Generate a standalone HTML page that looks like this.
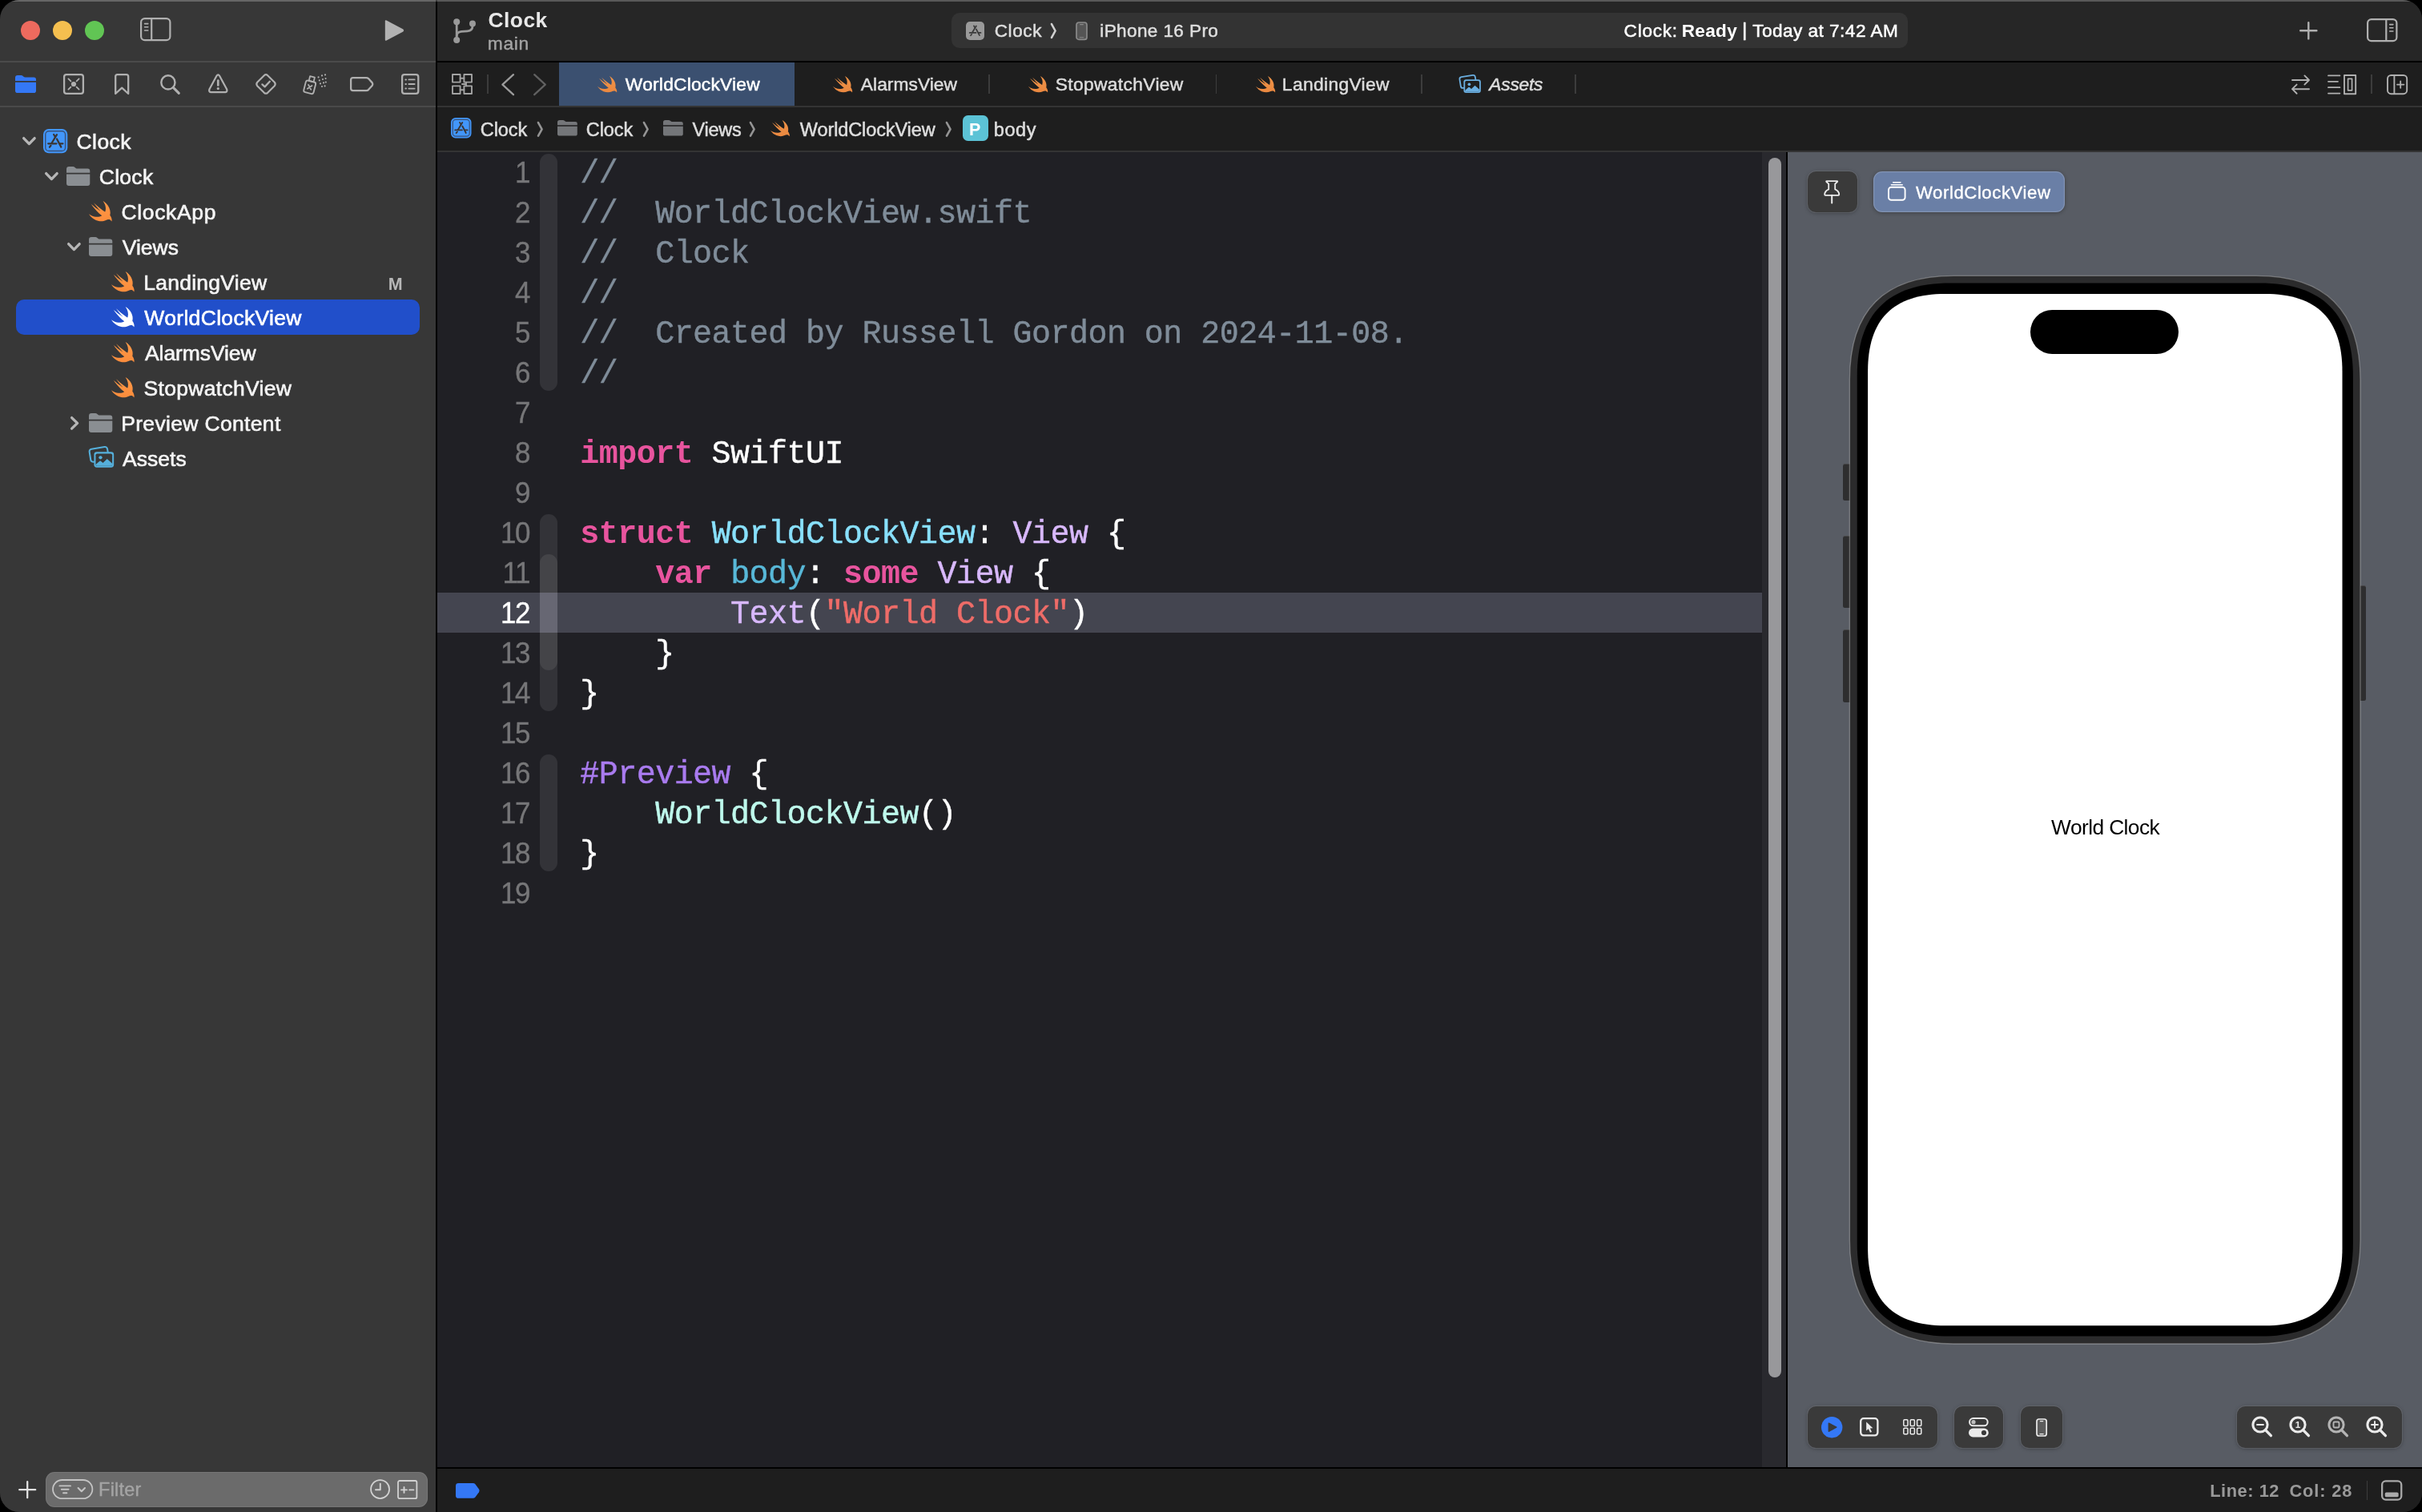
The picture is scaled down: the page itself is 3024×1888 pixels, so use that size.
<!DOCTYPE html><html lang="en"><head><meta charset="utf-8"><title>Clock — WorldClockView.swift</title><style>
html,body{margin:0;padding:0;background:#000;}
body{width:3024px;height:1888px;overflow:hidden;position:relative;font-family:"Liberation Sans",sans-serif;}
div,svg,section,header,nav,footer,aside,main,.t{position:absolute;box-sizing:border-box;margin:0;padding:0;}
.ic{overflow:visible;display:block}
.t{white-space:pre;line-height:1;display:block}
#window{will-change:transform;left:0;top:0;width:3024px;height:1888px;border-radius:24px;overflow:hidden;background:#1e1e1e;}
#sidebar{left:0;top:0;width:544px;height:1888px;background:#373737;}
#split{left:544px;top:0;width:2px;height:1888px;background:#000;}
#toolbar{left:546px;top:0;width:2478px;height:76px;background:#262626;}
#tabbar{left:546px;top:78px;width:2478px;height:54px;background:#1e1e1e;}
#crumbs{left:546px;top:134px;width:2478px;height:54px;background:#1e1e1e;}
#editor{left:546px;top:190px;width:1654px;height:1642px;background:#202025;overflow:hidden;}
#gutterR{left:2200px;top:190px;width:30px;height:1642px;background:#29292e;}
#preview{left:2232px;top:190px;width:792px;height:1642px;background:#585c64;overflow:hidden;}
#status{left:546px;top:1834px;width:2478px;height:54px;background:#1e1e1e;}
.hl{background:#000}
.code{font-family:"Liberation Mono",monospace;font-size:40px;letter-spacing:-0.515px;line-height:50px;white-space:pre;color:#ffffff;height:50px;left:178.2px;margin-top:2.8px;-webkit-text-stroke:0.4px}
.code b{font-weight:700;color:#e8549e;-webkit-text-stroke:0}
.ln{font-size:36.6px;letter-spacing:-1.5px;line-height:50px;height:50px;width:100px;left:15px;transform:scaleX(0.955);transform-origin:98.5px 25px;-webkit-text-stroke:0.35px;text-align:right;color:#767678;white-space:pre;margin-top:0.9px}
.c{color:#7f8c99}.ty{color:#88e0fc}.sy{color:#d8b8fc}.od{color:#58b8d8}.st{color:#ee6c68}.mc{color:#a97bef}.pj{color:#bef8ec}
.pbtn{background:#3a3a3a;border-radius:10.5px;box-shadow:0 0 0 1px rgba(255,255,255,0.10),0 1px 5px rgba(0,0,0,0.35);}
</style></head><body><div id="window"><aside id="sidebar"><div style="left:25.8px;top:25.8px;width:24.4px;height:24.4px;border-radius:50%;background:#ed6a5e;"></div><div style="left:65.8px;top:25.8px;width:24.4px;height:24.4px;border-radius:50%;background:#f5bf4f;"></div><div style="left:105.8px;top:25.8px;width:24.4px;height:24.4px;border-radius:50%;background:#61c554;"></div><svg class="ic" style="left:175.0px;top:22.3px" width="38.5" height="29.2" viewBox="0 0 38.5 29.2" ><rect x="1.1" y="1.1" width="36.3" height="27" rx="4.6" fill="none" stroke="#b0b0b0" stroke-width="2.2" stroke-linecap="round" stroke-linejoin="round"/><path d="M14.2 1.4 V27.8" fill="none" stroke="#b0b0b0" stroke-width="2.2" stroke-linecap="round" stroke-linejoin="round"/><path d="M5.6 7.6 H9.8 M5.6 11.8 H9.8 M5.6 16 H9.8" fill="none" stroke="#b0b0b0" stroke-width="1.6" stroke-linecap="round" stroke-linejoin="round"/></svg><svg class="ic" style="left:479.3px;top:24.0px" width="26.0" height="28.0" viewBox="0 0 26 28" ><path d="M1.8 2.6 Q1.8 0.6 3.6 1.5 L24.4 12.6 Q26 14 24.4 15.4 L3.6 26.5 Q1.8 27.4 1.8 25.4 Z" fill="#b2b2b2"/></svg><div style="left:0.0px;top:76.4px;width:544.0px;height:1.8px;background:#4a4a4a;"></div><div style="left:0.0px;top:132.4px;width:544.0px;height:1.8px;background:#4a4a4a;"></div><svg class="ic" style="left:19.0px;top:94.0px" width="26.0" height="22.0" viewBox="0 0 26 22" ><path d="M0 3 Q0 0 3 0 H7.4 Q8.5 0 9.4 0.8 L10.8 2 Q11.4 2.4 12.3 2.4 H23.2 Q26 2.4 26 5.2 V7 H0 Z" fill="#3478f6"/><path d="M0 8.7 H26 V19.2 Q26 22 23.2 22 H2.8 Q0 22 0 19.2 Z" fill="#3478f6"/></svg><svg class="ic" style="left:78.8px;top:92.0px" width="26.0" height="26.0" viewBox="0 0 26 26" ><rect x="1.1" y="1.1" width="23.8" height="23.8" rx="2.8" fill="none" stroke="#b0b0b0" stroke-width="2.3" stroke-linecap="round" stroke-linejoin="round"/><circle cx="13" cy="13" r="3.1" fill="#b0b0b0"/><path d="M6.4 6.4 L9.4 9.4 M19.6 6.4 L16.6 9.4 M6.4 19.6 L9.4 16.6 M19.6 19.6 L16.6 16.6" fill="none" stroke="#b0b0b0" stroke-width="1.8" stroke-linecap="round" stroke-linejoin="round"/></svg><svg class="ic" style="left:143.0px;top:92.0px" width="18.4" height="26.4" viewBox="0 0 18.4 26.4" ><path d="M1.2 3.6 Q1.2 1.2 3.6 1.2 H14.8 Q17.2 1.2 17.2 3.6 V25 L9.2 17.6 L1.2 25 Z" fill="none" stroke="#b0b0b0" stroke-width="2.3" stroke-linecap="round" stroke-linejoin="round"/></svg><svg class="ic" style="left:199.6px;top:92.8px" width="25.0" height="25.0" viewBox="0 0 25 25" ><circle cx="9.9" cy="9.9" r="8.6" fill="none" stroke="#b0b0b0" stroke-width="2.4" stroke-linecap="round" stroke-linejoin="round"/><path d="M16.4 16.4 L23.3 23.4" fill="none" stroke="#b0b0b0" stroke-width="3.0999999999999996" stroke-linecap="round" stroke-linejoin="round"/></svg><svg class="ic" style="left:259.6px;top:92.0px" width="24.6" height="24.6" viewBox="0 0 24.6 24.6" ><path d="M12.3 1.3 Q13.3 1.3 14 2.5 L23.2 19.6 Q24.2 22.6 21.4 23.2 H3.2 Q0.4 22.6 1.4 19.6 L10.6 2.5 Q11.3 1.3 12.3 1.3 Z" fill="none" stroke="#b0b0b0" stroke-width="2.2" stroke-linecap="round" stroke-linejoin="round"/><path d="M12.3 8.6 V14.4" fill="none" stroke="#b0b0b0" stroke-width="2.7" stroke-linecap="round" stroke-linejoin="round"/><circle cx="12.3" cy="18.6" r="1.6" fill="#b0b0b0"/></svg><svg class="ic" style="left:318.8px;top:92.0px" width="26.0" height="26.0" viewBox="0 0 26 26" ><path d="M13 1.1 Q14.1 1.1 15.2 2.2 L23.8 10.8 Q25.6 13 23.8 15.2 L15.2 23.8 Q13 25.6 10.8 23.8 L2.2 15.2 Q0.4 13 2.2 10.8 L10.8 2.2 Q11.9 1.1 13 1.1 Z" fill="none" stroke="#b0b0b0" stroke-width="2.2" stroke-linecap="round" stroke-linejoin="round"/><path d="M8.4 13.4 L11.6 16.4 L17.8 9.8" fill="none" stroke="#b0b0b0" stroke-width="2.3" stroke-linecap="round" stroke-linejoin="round"/></svg><svg class="ic" style="left:377.5px;top:92.0px" width="30.0" height="26.0" viewBox="0 0 30 26" ><g transform="rotate(14 9 16)"><rect x="2.6" y="9.4" width="12.6" height="15" rx="2.4" fill="none" stroke="#b0b0b0" stroke-width="1.9" stroke-linecap="round" stroke-linejoin="round"/><rect x="6" y="3.4" width="6" height="6" fill="none" stroke="#b0b0b0" stroke-width="1.8" stroke-linecap="round" stroke-linejoin="round"/><path d="M6.6 14.4 L11.2 19.4 M11.2 14.4 L6.6 19.4" fill="none" stroke="#b0b0b0" stroke-width="1.8" stroke-linecap="round" stroke-linejoin="round"/></g><circle cx="19.6" cy="4.4" r="1.05" fill="#b0b0b0"/><circle cx="24" cy="2.4" r="1.05" fill="#b0b0b0"/><circle cx="28" cy="1.4" r="1.05" fill="#b0b0b0"/><circle cx="20.8" cy="8.4" r="1.05" fill="#b0b0b0"/><circle cx="25" cy="7" r="1.05" fill="#b0b0b0"/><circle cx="28.6" cy="6" r="1.05" fill="#b0b0b0"/><circle cx="22" cy="12.4" r="1.05" fill="#b0b0b0"/><circle cx="26" cy="11.4" r="1.05" fill="#b0b0b0"/><circle cx="28.8" cy="10.6" r="1.05" fill="#b0b0b0"/><circle cx="24" cy="16" r="1.05" fill="#b0b0b0"/><circle cx="27.6" cy="15.4" r="1.05" fill="#b0b0b0"/></svg><svg class="ic" style="left:436.7px;top:95.7px" width="29.6" height="18.2" viewBox="0 0 29.6 18.2" ><path d="M3.6 1.1 H20.4 Q22 1.1 23 2.1 L27.8 7.4 Q29 9.1 27.8 10.8 L23 16.1 Q22 17.1 20.4 17.1 H3.6 Q1.1 17.1 1.1 14.6 V3.6 Q1.1 1.1 3.6 1.1 Z" fill="none" stroke="#b0b0b0" stroke-width="2.3" stroke-linecap="round" stroke-linejoin="round"/></svg><svg class="ic" style="left:500.9px;top:92.0px" width="22.4" height="26.0" viewBox="0 0 22.4 26" ><rect x="1.1" y="1.1" width="20.2" height="23.8" rx="2.8" fill="none" stroke="#b0b0b0" stroke-width="2.3" stroke-linecap="round" stroke-linejoin="round"/><path d="M9.4 7.4 H16.6 M9.4 13 H16.6 M9.4 18.6 H16.6" fill="none" stroke="#b0b0b0" stroke-width="1.9" stroke-linecap="round" stroke-linejoin="round"/><path d="M5.4 7.4 H6 M5.4 13 H6 M5.4 18.6 H6" fill="none" stroke="#b0b0b0" stroke-width="2" stroke-linecap="round" stroke-linejoin="round"/></svg><div style="left:20.0px;top:374.0px;width:504.0px;height:44.0px;background:#214fca;border-radius:10px;"></div><svg class="ic" style="left:27.7px;top:171.4px" width="16.8" height="10.4" viewBox="0 0 16.8 10.4" ><path d="M1.6 1.6 L8.4 8.6 L15.2 1.6" fill="none" stroke="#b6b6b6" stroke-width="3.3" stroke-linecap="round" stroke-linejoin="round"/></svg><svg class="ic" style="left:53.9px;top:160.9px" width="30.3" height="30.3" viewBox="0 0 30 30" ><rect x="0" y="0" width="30" height="30" rx="6.8" fill="#4296fa"/><rect x="2.7" y="2.7" width="24.6" height="24.6" rx="4.3" fill="none" stroke="#38527a" stroke-width="1.4"/><g stroke="#3a3533" stroke-width="2.2" stroke-linecap="round" fill="none"><path d="M16.8 7.1 L10.4 17.6"/><path d="M9.4 20.6 L7.8 22.5"/><path d="M13 6.9 L14.5 9.4"/><path d="M16.8 12.4 L22.1 22.4"/><path d="M6.1 18.1 H16.3"/><path d="M20.8 18.1 H24.2"/></g></svg><span class="t" id="sb0" style="left:95.55px;top:164.00px;font-size:26.5px;color:#f5f5f5;letter-spacing:0.415px;-webkit-text-stroke:0.6px #f5f5f5;">Clock</span><svg class="ic" style="left:55.9px;top:215.4px" width="16.8" height="10.4" viewBox="0 0 16.8 10.4" ><path d="M1.6 1.6 L8.4 8.6 L15.2 1.6" fill="none" stroke="#b6b6b6" stroke-width="3.3" stroke-linecap="round" stroke-linejoin="round"/></svg><svg class="ic" style="left:82.9px;top:208.1px" width="29.3" height="24.0" viewBox="0 0 29.3 24" preserveAspectRatio="none"><path d="M0 3.2 Q0 0 3.2 0 H8.2 Q9.4 0 10.4 0.9 L12 2.2 Q12.6 2.6 13.6 2.6 H26.3 Q29.3 2.6 29.3 5.6 V7.75 H0 Z" fill="#8a8e92"/><path d="M0 9.6 H29.3 V21 Q29.3 24 26.3 24 H3 Q0 24 0 21 Z" fill="#8a8e92"/></svg><span class="t" id="sb1" style="left:123.71px;top:208.00px;font-size:26.5px;color:#f5f5f5;letter-spacing:0.295px;-webkit-text-stroke:0.6px #f5f5f5;">Clock</span><svg class="ic" style="left:111.0px;top:250.8px" width="28.6" height="25.6" viewBox="2.45 3.41 18.05 16.35" preserveAspectRatio="none"><defs><linearGradient id="sg1" x1="0" y1="0" x2="0" y2="1"><stop offset="0" stop-color="#ff9a48"/><stop offset="1" stop-color="#fb8c3c"/></linearGradient></defs><path d="M13.543 3.41c4.114 2.47 6.545 7.162 5.549 11.131-.024.093-.05.181-.076.272l.002.001c2.062 2.538 1.5 5.258 1.236 4.745-1.072-2.086-3.066-1.568-4.088-1.043a6.803 6.803 0 0 1-.281.158l-.02.012-.002.002c-2.115 1.123-4.957 1.205-7.812-.022a12.568 12.568 0 0 1-5.64-4.838c.649.48 1.35.902 2.097 1.252 3.019 1.414 6.051 1.311 8.197-.002C9.651 12.73 7.101 9.67 5.146 7.191a10.628 10.628 0 0 1-1.005-1.384c2.34 2.142 6.038 4.83 7.365 5.576C8.69 8.408 6.208 4.743 6.324 4.86c4.436 4.47 8.528 6.996 8.528 6.996.154.085.27.154.36.213.085-.215.16-.437.224-.668.708-2.588-.09-5.548-1.893-7.992z" fill="url(#sg1)"/></svg><span class="t" id="sb2" style="left:151.55px;top:252.00px;font-size:26.5px;color:#f5f5f5;letter-spacing:0.629px;-webkit-text-stroke:0.6px #f5f5f5;">ClockApp</span><svg class="ic" style="left:84.1px;top:303.4px" width="16.8" height="10.4" viewBox="0 0 16.8 10.4" ><path d="M1.6 1.6 L8.4 8.6 L15.2 1.6" fill="none" stroke="#b6b6b6" stroke-width="3.3" stroke-linecap="round" stroke-linejoin="round"/></svg><svg class="ic" style="left:111.1px;top:296.1px" width="29.3" height="24.0" viewBox="0 0 29.3 24" preserveAspectRatio="none"><path d="M0 3.2 Q0 0 3.2 0 H8.2 Q9.4 0 10.4 0.9 L12 2.2 Q12.6 2.6 13.6 2.6 H26.3 Q29.3 2.6 29.3 5.6 V7.75 H0 Z" fill="#8a8e92"/><path d="M0 9.6 H29.3 V21 Q29.3 24 26.3 24 H3 Q0 24 0 21 Z" fill="#8a8e92"/></svg><span class="t" id="sb3" style="left:152.84px;top:296.00px;font-size:26.5px;color:#f5f5f5;letter-spacing:-0.038px;-webkit-text-stroke:0.6px #f5f5f5;">Views</span><svg class="ic" style="left:138.7px;top:338.8px" width="28.6" height="25.6" viewBox="2.45 3.41 18.05 16.35" preserveAspectRatio="none"><defs><linearGradient id="sg2" x1="0" y1="0" x2="0" y2="1"><stop offset="0" stop-color="#ff9a48"/><stop offset="1" stop-color="#fb8c3c"/></linearGradient></defs><path d="M13.543 3.41c4.114 2.47 6.545 7.162 5.549 11.131-.024.093-.05.181-.076.272l.002.001c2.062 2.538 1.5 5.258 1.236 4.745-1.072-2.086-3.066-1.568-4.088-1.043a6.803 6.803 0 0 1-.281.158l-.02.012-.002.002c-2.115 1.123-4.957 1.205-7.812-.022a12.568 12.568 0 0 1-5.64-4.838c.649.48 1.35.902 2.097 1.252 3.019 1.414 6.051 1.311 8.197-.002C9.651 12.73 7.101 9.67 5.146 7.191a10.628 10.628 0 0 1-1.005-1.384c2.34 2.142 6.038 4.83 7.365 5.576C8.69 8.408 6.208 4.743 6.324 4.86c4.436 4.47 8.528 6.996 8.528 6.996.154.085.27.154.36.213.085-.215.16-.437.224-.668.708-2.588-.09-5.548-1.893-7.992z" fill="url(#sg2)"/></svg><span class="t" id="sb4" style="left:179.20px;top:340.00px;font-size:26.5px;color:#f5f5f5;letter-spacing:0.257px;-webkit-text-stroke:0.6px #f5f5f5;">LandingView</span><svg class="ic" style="left:138.7px;top:382.8px" width="28.6" height="25.6" viewBox="2.45 3.41 18.05 16.35" preserveAspectRatio="none"><path d="M13.543 3.41c4.114 2.47 6.545 7.162 5.549 11.131-.024.093-.05.181-.076.272l.002.001c2.062 2.538 1.5 5.258 1.236 4.745-1.072-2.086-3.066-1.568-4.088-1.043a6.803 6.803 0 0 1-.281.158l-.02.012-.002.002c-2.115 1.123-4.957 1.205-7.812-.022a12.568 12.568 0 0 1-5.64-4.838c.649.48 1.35.902 2.097 1.252 3.019 1.414 6.051 1.311 8.197-.002C9.651 12.73 7.101 9.67 5.146 7.191a10.628 10.628 0 0 1-1.005-1.384c2.34 2.142 6.038 4.83 7.365 5.576C8.69 8.408 6.208 4.743 6.324 4.86c4.436 4.47 8.528 6.996 8.528 6.996.154.085.27.154.36.213.085-.215.16-.437.224-.668.708-2.588-.09-5.548-1.893-7.992z" fill="#ffffff"/></svg><span class="t" id="sb5" style="left:180.33px;top:384.00px;font-size:26.5px;color:#ffffff;letter-spacing:0.323px;-webkit-text-stroke:0.6px #ffffff;">WorldClockView</span><svg class="ic" style="left:138.7px;top:426.8px" width="28.6" height="25.6" viewBox="2.45 3.41 18.05 16.35" preserveAspectRatio="none"><defs><linearGradient id="sg4" x1="0" y1="0" x2="0" y2="1"><stop offset="0" stop-color="#ff9a48"/><stop offset="1" stop-color="#fb8c3c"/></linearGradient></defs><path d="M13.543 3.41c4.114 2.47 6.545 7.162 5.549 11.131-.024.093-.05.181-.076.272l.002.001c2.062 2.538 1.5 5.258 1.236 4.745-1.072-2.086-3.066-1.568-4.088-1.043a6.803 6.803 0 0 1-.281.158l-.02.012-.002.002c-2.115 1.123-4.957 1.205-7.812-.022a12.568 12.568 0 0 1-5.64-4.838c.649.48 1.35.902 2.097 1.252 3.019 1.414 6.051 1.311 8.197-.002C9.651 12.73 7.101 9.67 5.146 7.191a10.628 10.628 0 0 1-1.005-1.384c2.34 2.142 6.038 4.83 7.365 5.576C8.69 8.408 6.208 4.743 6.324 4.86c4.436 4.47 8.528 6.996 8.528 6.996.154.085.27.154.36.213.085-.215.16-.437.224-.668.708-2.588-.09-5.548-1.893-7.992z" fill="url(#sg4)"/></svg><span class="t" id="sb6" style="left:181.00px;top:428.00px;font-size:26.5px;color:#f5f5f5;letter-spacing:-0.090px;-webkit-text-stroke:0.6px #f5f5f5;">AlarmsView</span><svg class="ic" style="left:138.7px;top:470.8px" width="28.6" height="25.6" viewBox="2.45 3.41 18.05 16.35" preserveAspectRatio="none"><defs><linearGradient id="sg5" x1="0" y1="0" x2="0" y2="1"><stop offset="0" stop-color="#ff9a48"/><stop offset="1" stop-color="#fb8c3c"/></linearGradient></defs><path d="M13.543 3.41c4.114 2.47 6.545 7.162 5.549 11.131-.024.093-.05.181-.076.272l.002.001c2.062 2.538 1.5 5.258 1.236 4.745-1.072-2.086-3.066-1.568-4.088-1.043a6.803 6.803 0 0 1-.281.158l-.02.012-.002.002c-2.115 1.123-4.957 1.205-7.812-.022a12.568 12.568 0 0 1-5.64-4.838c.649.48 1.35.902 2.097 1.252 3.019 1.414 6.051 1.311 8.197-.002C9.651 12.73 7.101 9.67 5.146 7.191a10.628 10.628 0 0 1-1.005-1.384c2.34 2.142 6.038 4.83 7.365 5.576C8.69 8.408 6.208 4.743 6.324 4.86c4.436 4.47 8.528 6.996 8.528 6.996.154.085.27.154.36.213.085-.215.16-.437.224-.668.708-2.588-.09-5.548-1.893-7.992z" fill="url(#sg5)"/></svg><span class="t" id="sb7" style="left:179.62px;top:472.00px;font-size:26.5px;color:#f5f5f5;letter-spacing:0.300px;-webkit-text-stroke:0.6px #f5f5f5;">StopwatchView</span><svg class="ic" style="left:87.7px;top:519.8px" width="10.4" height="16.8" viewBox="0 0 10.4 16.8" ><path d="M1.6 1.6 L8.6 8.4 L1.6 15.2" fill="none" stroke="#b6b6b6" stroke-width="3.3" stroke-linecap="round" stroke-linejoin="round"/></svg><svg class="ic" style="left:111.1px;top:516.1px" width="29.3" height="24.0" viewBox="0 0 29.3 24" preserveAspectRatio="none"><path d="M0 3.2 Q0 0 3.2 0 H8.2 Q9.4 0 10.4 0.9 L12 2.2 Q12.6 2.6 13.6 2.6 H26.3 Q29.3 2.6 29.3 5.6 V7.75 H0 Z" fill="#8a8e92"/><path d="M0 9.6 H29.3 V21 Q29.3 24 26.3 24 H3 Q0 24 0 21 Z" fill="#8a8e92"/></svg><span class="t" id="sb8" style="left:151.20px;top:516.00px;font-size:26.5px;color:#f5f5f5;letter-spacing:0.331px;-webkit-text-stroke:0.6px #f5f5f5;">Preview Content</span><svg class="ic" style="left:109.6px;top:557.4px" width="33.0" height="27.6" viewBox="0 0 32 27" preserveAspectRatio="none"><g transform="rotate(-9 12 10)"><rect x="2.2" y="2.4" width="22" height="16" rx="3" fill="none" stroke="#55b0dc" stroke-width="2"/></g><rect x="7.2" y="7.2" width="24" height="19" rx="3.4" fill="#55b0dc" stroke="#363636" stroke-width="0" /><rect x="9.2" y="9.2" width="20" height="15" rx="1.8" fill="#373737"/><circle cx="15" cy="14" r="2.1" fill="#55b0dc"/><path d="M9.2 22.6 L14.6 17.8 L18 20.6 L23 15.6 L29.2 21.4 V22.4 Q29.2 24.2 27.4 24.2 H11 Q9.2 24.2 9.2 22.6 Z" fill="#55b0dc"/></svg><span class="t" id="sb9" style="left:153.00px;top:560.00px;font-size:26.5px;color:#f5f5f5;letter-spacing:0.030px;-webkit-text-stroke:0.6px #f5f5f5;">Assets</span><span class="t" id="sbM" style="left:484.66px;top:345.00px;font-size:21.5px;color:#b6b6b6;font-weight:700;">M</span><svg class="ic" style="left:23.4px;top:1849.2px" width="22.4" height="22.4" viewBox="0 0 22.4 22.4" ><path d="M11.2 1.2 V21.2 M1.2 11.2 H21.2" fill="none" stroke="#e2e2e2" stroke-width="2.3" stroke-linecap="round" stroke-linejoin="round"/></svg><div style="left:56.5px;top:1838.4px;width:477.0px;height:43.4px;background:#6b6b6b;border-radius:11px;box-shadow:inset 0 0 0 1px rgba(255,255,255,0.08);"></div><svg class="ic" style="left:65.3px;top:1847.2px" width="51.4" height="25.2" viewBox="0 0 51.4 25.2" ><rect x="1" y="1" width="49.4" height="23.2" rx="11.6" fill="none" stroke="#c4c4c4" stroke-width="1.8" stroke-linecap="round" stroke-linejoin="round"/><path d="M9.4 8.4 H23 M11.8 12.8 H20.6 M14 17.2 H18.4" fill="none" stroke="#c4c4c4" stroke-width="1.9" stroke-linecap="round" stroke-linejoin="round"/><path d="M32.6 11 L36.8 15.2 L41 11" fill="none" stroke="#c4c4c4" stroke-width="2.1" stroke-linecap="round" stroke-linejoin="round"/></svg><span class="t" id="filter" style="left:123.10px;top:1849.00px;font-size:23.4px;color:#a4a4a4;letter-spacing:0.244px;-webkit-text-stroke:0.4px #a4a4a4;">Filter</span><svg class="ic" style="left:462.2px;top:1847.4px" width="25.2" height="25.2" viewBox="0 0 25.2 25.2" ><circle cx="12.6" cy="12.6" r="11.5" fill="none" stroke="#d2d2d2" stroke-width="1.8" stroke-linecap="round" stroke-linejoin="round"/><path d="M12.8 5.6 V13.2 H7" fill="none" stroke="#d2d2d2" stroke-width="1.9" stroke-linecap="round" stroke-linejoin="round"/></svg><svg class="ic" style="left:496.4px;top:1847.9px" width="25.4" height="24.2" viewBox="0 0 25.4 24.2" ><rect x="1" y="1" width="23.4" height="22.2" rx="2" fill="none" stroke="#d2d2d2" stroke-width="1.8" stroke-linecap="round" stroke-linejoin="round"/><path d="M5 12.4 H12 M8.5 8.9 V15.9 M15.2 12.4 H20.4" fill="none" stroke="#d2d2d2" stroke-width="1.9" stroke-linecap="round" stroke-linejoin="round"/></svg></aside><div id="split"></div><header id="toolbar"><svg class="ic" style="left:19.6px;top:23.2px" width="28.2" height="31.2" viewBox="0 0 28.2 31.2" ><circle cx="4.2" cy="4.2" r="4" fill="#9a9a9a"/><circle cx="24" cy="6.6" r="4" fill="#9a9a9a"/><circle cx="4.2" cy="27" r="4" fill="#9a9a9a"/><path d="M4.2 4.2 V27" fill="none" stroke="#9a9a9a" stroke-width="2.8" stroke-linecap="round" stroke-linejoin="round"/><path d="M24 6.6 V9.6 Q24 15.4 17.6 15.8 L10 16.4 Q4.2 17 4.2 22" fill="none" stroke="#9a9a9a" stroke-width="2.8" stroke-linecap="round" stroke-linejoin="round"/></svg><span class="t" id="tbTitle" style="left:63.52px;top:12.00px;font-size:26.4px;color:#e8e8e8;font-weight:700;letter-spacing:0.469px;">Clock</span><span class="t" id="tbBranch" style="left:62.82px;top:43.00px;font-size:22.8px;color:#a4a4a4;letter-spacing:0.642px;-webkit-text-stroke:0.4px #a4a4a4;">main</span><div style="left:642.0px;top:16.0px;width:1194.0px;height:44.0px;background:#333333;border-radius:10px;"></div><svg class="ic" style="left:660.0px;top:26.8px" width="23.0" height="23.0" viewBox="0 0 30 30" ><rect x="0" y="0" width="30" height="30" rx="6.5" fill="#9a9a9a"/><g stroke="#3a3a3a" stroke-width="2.2" stroke-linecap="round" fill="none"><path d="M16.8 7.1 L10.4 17.6"/><path d="M9.4 20.6 L7.8 22.5"/><path d="M13 6.9 L14.5 9.4"/><path d="M16.8 12.4 L22.1 22.4"/><path d="M6.1 18.1 H16.3"/><path d="M20.8 18.1 H24.2"/></g></svg><span class="t" id="tbScheme" style="left:695.74px;top:28.00px;font-size:22.6px;color:#dedede;letter-spacing:0.568px;-webkit-text-stroke:0.5px #dedede;">Clock</span><svg class="ic" style="left:766.2px;top:29.2px" width="6.6" height="19.0" viewBox="0 0 6.6 19" ><path d="M1 1 L5.6 9.5 L1 18.0" fill="none" stroke="#d0d0d0" stroke-width="2.6" stroke-linecap="round" stroke-linejoin="round"/></svg><svg class="ic" style="left:796.8px;top:26.5px" width="15.0" height="23.4" viewBox="0 0 15 23.4" ><rect x="1" y="1" width="13" height="21.4" rx="3" fill="#555" stroke="#8a8a8a" stroke-width="1.7"/><path d="M5.6 3.6 H9.4 M5.2 19.8 H9.8" fill="none" stroke="#8a8a8a" stroke-width="1.1" stroke-linecap="round" stroke-linejoin="round"/></svg><span class="t" id="tbDevice" style="left:827.25px;top:28.00px;font-size:22.6px;color:#dedede;letter-spacing:0.366px;-webkit-text-stroke:0.5px #dedede;">iPhone 16 Pro</span><span class="t" id="tbSt1" style="left:1481.57px;top:28.00px;font-size:22.6px;color:#ffffff;letter-spacing:0.747px;-webkit-text-stroke:0.5px #ffffff;">Clock:</span><span class="t" id="tbSt2" style="left:1553.70px;top:28.00px;font-size:22.6px;color:#ffffff;font-weight:700;letter-spacing:0.320px;">Ready</span><span class="t" id="tbSt3" style="left:1629.00px;top:25.00px;font-size:24.5px;color:#ffffff;-webkit-text-stroke:0.5px #ffffff;">|</span><span class="t" id="tbSt4" style="left:1642.15px;top:28.00px;font-size:22.6px;color:#ffffff;letter-spacing:0.470px;-webkit-text-stroke:0.5px #ffffff;">Today at 7:42 AM</span><svg class="ic" style="left:2324.5px;top:26.8px" width="22.6" height="22.6" viewBox="0 0 22.6 22.6" ><path d="M11.3 1.2 V21.400000000000002 M1.2 11.3 H21.400000000000002" fill="none" stroke="#b0b0b0" stroke-width="2.4" stroke-linecap="round" stroke-linejoin="round"/></svg><svg class="ic" style="left:2409.2px;top:22.6px" width="38.5" height="29.2" viewBox="0 0 38.5 29.2" ><rect x="1.1" y="1.1" width="36.3" height="27" rx="4.6" fill="none" stroke="#b0b0b0" stroke-width="2.2" stroke-linecap="round" stroke-linejoin="round"/><path d="M24.3 1.4 V27.8" fill="none" stroke="#b0b0b0" stroke-width="2.2" stroke-linecap="round" stroke-linejoin="round"/><path d="M28.7 7.6 H32.9 M28.7 11.8 H32.9 M28.7 16 H32.9" fill="none" stroke="#b0b0b0" stroke-width="1.6" stroke-linecap="round" stroke-linejoin="round"/></svg></header><div class="hl" style="left:546.0px;top:76.0px;width:2478.0px;height:2.0px;background:#000;"></div><nav id="tabbar"><svg class="ic" style="left:18.0px;top:14.2px" width="26.0" height="26.0" viewBox="0 0 26 26" ><rect x="1" y="1" width="9.6" height="9.6" fill="none" stroke="#a3a3a3" stroke-width="1.9" stroke-linecap="round" stroke-linejoin="round" stroke-linejoin="miter"/><rect x="15.4" y="1" width="9.6" height="9.6" fill="none" stroke="#a3a3a3" stroke-width="1.9" stroke-linecap="round" stroke-linejoin="round" stroke-linejoin="miter"/><rect x="1" y="15.4" width="9.6" height="9.6" fill="none" stroke="#a3a3a3" stroke-width="1.9" stroke-linecap="round" stroke-linejoin="round" stroke-linejoin="miter"/><rect x="15.4" y="15.4" width="9.6" height="9.6" fill="none" stroke="#a3a3a3" stroke-width="1.9" stroke-linecap="round" stroke-linejoin="round" stroke-linejoin="miter"/><path d="M10.6 5.8 H15.4 M10.6 20.2 H15.4 M18 10.6 V15.4 M13 13 H18" fill="none" stroke="#a3a3a3" stroke-width="1.9" stroke-linecap="round" stroke-linejoin="round"/></svg><div style="left:62.0px;top:15.4px;width:1.6px;height:23.2px;background:#3c3c3c;"></div><svg class="ic" style="left:79.5px;top:13.7px" width="16.2" height="27.4" viewBox="0 0 16.2 27.4" ><path d="M15.0 1.2 L1.4 13.7 L15.0 26.2" fill="none" stroke="#9c9c9c" stroke-width="2.3" stroke-linecap="round" stroke-linejoin="round"/></svg><svg class="ic" style="left:119.6px;top:13.7px" width="16.2" height="27.4" viewBox="0 0 16.2 27.4" ><path d="M1.2 1.2 L14.799999999999999 13.7 L1.2 26.2" fill="none" stroke="#616161" stroke-width="2.3" stroke-linecap="round" stroke-linejoin="round"/></svg><div style="left:152.0px;top:0.0px;width:294.0px;height:54.0px;background:#3b5070;"></div><svg class="ic" style="left:200.3px;top:17.2px" width="24.2" height="20.6" viewBox="2.45 3.41 18.05 16.35" preserveAspectRatio="none"><defs><linearGradient id="sg6" x1="0" y1="0" x2="0" y2="1"><stop offset="0" stop-color="#f09448"/><stop offset="1" stop-color="#ea8840"/></linearGradient></defs><path d="M13.543 3.41c4.114 2.47 6.545 7.162 5.549 11.131-.024.093-.05.181-.076.272l.002.001c2.062 2.538 1.5 5.258 1.236 4.745-1.072-2.086-3.066-1.568-4.088-1.043a6.803 6.803 0 0 1-.281.158l-.02.012-.002.002c-2.115 1.123-4.957 1.205-7.812-.022a12.568 12.568 0 0 1-5.64-4.838c.649.48 1.35.902 2.097 1.252 3.019 1.414 6.051 1.311 8.197-.002C9.651 12.73 7.101 9.67 5.146 7.191a10.628 10.628 0 0 1-1.005-1.384c2.34 2.142 6.038 4.83 7.365 5.576C8.69 8.408 6.208 4.743 6.324 4.86c4.436 4.47 8.528 6.996 8.528 6.996.154.085.27.154.36.213.085-.215.16-.437.224-.668.708-2.588-.09-5.548-1.893-7.992z" fill="url(#sg6)"/></svg><span class="t" id="tab0" style="left:234.87px;top:16.00px;font-size:22.8px;color:#ffffff;letter-spacing:0.210px;-webkit-text-stroke:0.5px #ffffff;">WorldClockView</span><svg class="ic" style="left:494.4px;top:17.2px" width="24.2" height="20.6" viewBox="2.45 3.41 18.05 16.35" preserveAspectRatio="none"><defs><linearGradient id="sg7" x1="0" y1="0" x2="0" y2="1"><stop offset="0" stop-color="#f09448"/><stop offset="1" stop-color="#ea8840"/></linearGradient></defs><path d="M13.543 3.41c4.114 2.47 6.545 7.162 5.549 11.131-.024.093-.05.181-.076.272l.002.001c2.062 2.538 1.5 5.258 1.236 4.745-1.072-2.086-3.066-1.568-4.088-1.043a6.803 6.803 0 0 1-.281.158l-.02.012-.002.002c-2.115 1.123-4.957 1.205-7.812-.022a12.568 12.568 0 0 1-5.64-4.838c.649.48 1.35.902 2.097 1.252 3.019 1.414 6.051 1.311 8.197-.002C9.651 12.73 7.101 9.67 5.146 7.191a10.628 10.628 0 0 1-1.005-1.384c2.34 2.142 6.038 4.83 7.365 5.576C8.69 8.408 6.208 4.743 6.324 4.86c4.436 4.47 8.528 6.996 8.528 6.996.154.085.27.154.36.213.085-.215.16-.437.224-.668.708-2.588-.09-5.548-1.893-7.992z" fill="url(#sg7)"/></svg><span class="t" id="tab1" style="left:528.82px;top:16.00px;font-size:22.8px;color:#dcdcdc;letter-spacing:0.033px;-webkit-text-stroke:0.5px #dcdcdc;">AlarmsView</span><div style="left:688.2px;top:15.0px;width:1.6px;height:23.6px;background:#3c3c3c;"></div><svg class="ic" style="left:737.9px;top:17.2px" width="24.2" height="20.6" viewBox="2.45 3.41 18.05 16.35" preserveAspectRatio="none"><defs><linearGradient id="sg8" x1="0" y1="0" x2="0" y2="1"><stop offset="0" stop-color="#f09448"/><stop offset="1" stop-color="#ea8840"/></linearGradient></defs><path d="M13.543 3.41c4.114 2.47 6.545 7.162 5.549 11.131-.024.093-.05.181-.076.272l.002.001c2.062 2.538 1.5 5.258 1.236 4.745-1.072-2.086-3.066-1.568-4.088-1.043a6.803 6.803 0 0 1-.281.158l-.02.012-.002.002c-2.115 1.123-4.957 1.205-7.812-.022a12.568 12.568 0 0 1-5.64-4.838c.649.48 1.35.902 2.097 1.252 3.019 1.414 6.051 1.311 8.197-.002C9.651 12.73 7.101 9.67 5.146 7.191a10.628 10.628 0 0 1-1.005-1.384c2.34 2.142 6.038 4.83 7.365 5.576C8.69 8.408 6.208 4.743 6.324 4.86c4.436 4.47 8.528 6.996 8.528 6.996.154.085.27.154.36.213.085-.215.16-.437.224-.668.708-2.588-.09-5.548-1.893-7.992z" fill="url(#sg8)"/></svg><span class="t" id="tab2" style="left:771.76px;top:16.00px;font-size:22.8px;color:#dcdcdc;letter-spacing:0.344px;-webkit-text-stroke:0.5px #dcdcdc;">StopwatchView</span><div style="left:971.9px;top:15.0px;width:1.6px;height:23.6px;background:#3c3c3c;"></div><svg class="ic" style="left:1022.2px;top:17.2px" width="24.2" height="20.6" viewBox="2.45 3.41 18.05 16.35" preserveAspectRatio="none"><defs><linearGradient id="sg9" x1="0" y1="0" x2="0" y2="1"><stop offset="0" stop-color="#f09448"/><stop offset="1" stop-color="#ea8840"/></linearGradient></defs><path d="M13.543 3.41c4.114 2.47 6.545 7.162 5.549 11.131-.024.093-.05.181-.076.272l.002.001c2.062 2.538 1.5 5.258 1.236 4.745-1.072-2.086-3.066-1.568-4.088-1.043a6.803 6.803 0 0 1-.281.158l-.02.012-.002.002c-2.115 1.123-4.957 1.205-7.812-.022a12.568 12.568 0 0 1-5.64-4.838c.649.48 1.35.902 2.097 1.252 3.019 1.414 6.051 1.311 8.197-.002C9.651 12.73 7.101 9.67 5.146 7.191a10.628 10.628 0 0 1-1.005-1.384c2.34 2.142 6.038 4.83 7.365 5.576C8.69 8.408 6.208 4.743 6.324 4.86c4.436 4.47 8.528 6.996 8.528 6.996.154.085.27.154.36.213.085-.215.16-.437.224-.668.708-2.588-.09-5.548-1.893-7.992z" fill="url(#sg9)"/></svg><span class="t" id="tab3" style="left:1054.85px;top:16.00px;font-size:22.8px;color:#dcdcdc;letter-spacing:0.354px;-webkit-text-stroke:0.5px #dcdcdc;">LandingView</span><div style="left:1228.0px;top:15.0px;width:1.6px;height:23.6px;background:#3c3c3c;"></div><svg class="ic" style="left:1275.2px;top:14.6px" width="28.6" height="23.6" viewBox="0 0 32 27" preserveAspectRatio="none"><g transform="rotate(-9 12 10)"><rect x="2.2" y="2.4" width="22" height="16" rx="3" fill="none" stroke="#6aaee0" stroke-width="2"/></g><rect x="7.2" y="7.2" width="24" height="19" rx="3.4" fill="#6aaee0" stroke="#363636" stroke-width="0" /><rect x="9.2" y="9.2" width="20" height="15" rx="1.8" fill="#1e1e1e"/><circle cx="15" cy="14" r="2.1" fill="#6aaee0"/><path d="M9.2 22.6 L14.6 17.8 L18 20.6 L23 15.6 L29.2 21.4 V22.4 Q29.2 24.2 27.4 24.2 H11 Q9.2 24.2 9.2 22.6 Z" fill="#6aaee0"/></svg><span class="t" id="tab4" style="left:1313.37px;top:16.00px;font-size:22.8px;color:#dcdcdc;font-style:italic;letter-spacing:-0.280px;-webkit-text-stroke:0.5px #dcdcdc;">Assets</span><div style="left:1420.0px;top:15.0px;width:1.6px;height:23.6px;background:#3c3c3c;"></div><svg class="ic" style="left:2313.5px;top:14.6px" width="25.0" height="25.2" viewBox="0 0 25 25.2" ><path d="M2 7 H23 M17.4 1.4 L23 7 L17.4 12.6" fill="none" stroke="#b0b0b0" stroke-width="1.9" stroke-linecap="round" stroke-linejoin="round"/><path d="M23 18.2 H2 M7.6 12.6 L2 18.2 L7.6 23.8" fill="none" stroke="#b0b0b0" stroke-width="1.9" stroke-linecap="round" stroke-linejoin="round"/></svg><svg class="ic" style="left:2359.7px;top:14.6px" width="36.2" height="25.2" viewBox="0 0 36.2 25.2" ><path d="M1 1.4 H15.4 M1 8.8 H13 M1 16.2 H15.4 M1 23.6 H15.4" fill="none" stroke="#b0b0b0" stroke-width="1.8" stroke-linecap="round" stroke-linejoin="round" stroke-linecap="butt"/><rect x="21" y="1" width="14.2" height="23.2" fill="none" stroke="#b0b0b0" stroke-width="1.9" stroke-linecap="round" stroke-linejoin="round" stroke-linejoin="miter"/><rect x="25.6" y="5.4" width="5" height="14.4" fill="none" stroke="#b0b0b0" stroke-width="1.7" stroke-linecap="round" stroke-linejoin="round" stroke-linejoin="miter"/></svg><div style="left:2414.2px;top:15.0px;width:1.6px;height:23.6px;background:#3c3c3c;"></div><svg class="ic" style="left:2434.0px;top:14.6px" width="26.2" height="25.2" viewBox="0 0 26.2 25.2" ><rect x="1" y="1" width="24.2" height="23.2" rx="4.4" fill="none" stroke="#b0b0b0" stroke-width="1.9" stroke-linecap="round" stroke-linejoin="round"/><path d="M9.4 1.2 V24" fill="none" stroke="#b0b0b0" stroke-width="1.9" stroke-linecap="round" stroke-linejoin="round"/><path d="M17.2 8.4 V16.8 M13 12.6 H21.4" fill="none" stroke="#b0b0b0" stroke-width="1.8" stroke-linecap="round" stroke-linejoin="round"/></svg></nav><div class="hl" style="left:546.0px;top:132.0px;width:2478.0px;height:2.0px;background:#343434;"></div><nav id="crumbs"><svg class="ic" style="left:17.0px;top:13.3px" width="25.5" height="25.5" viewBox="0 0 30 30" ><rect x="0" y="0" width="30" height="30" rx="6.8" fill="#4296fa"/><rect x="2.7" y="2.7" width="24.6" height="24.6" rx="4.3" fill="none" stroke="#38527a" stroke-width="1.4"/><g stroke="#3a3533" stroke-width="2.2" stroke-linecap="round" fill="none"><path d="M16.8 7.1 L10.4 17.6"/><path d="M9.4 20.6 L7.8 22.5"/><path d="M13 6.9 L14.5 9.4"/><path d="M16.8 12.4 L22.1 22.4"/><path d="M6.1 18.1 H16.3"/><path d="M20.8 18.1 H24.2"/></g></svg><span class="t" id="cr0" style="left:53.85px;top:17.00px;font-size:23.5px;color:#dedede;letter-spacing:-0.103px;-webkit-text-stroke:0.5px #dedede;">Clock</span><svg class="ic" style="left:124.8px;top:18.4px" width="6.6" height="18.6" viewBox="0 0 6.6 18.6" ><path d="M1 1 L5.6 9.3 L1 17.6" fill="none" stroke="#949494" stroke-width="2.6" stroke-linecap="round" stroke-linejoin="round"/></svg><svg class="ic" style="left:150.0px;top:16.4px" width="24.8" height="19.6" viewBox="0 0 29.3 24" preserveAspectRatio="none"><path d="M0 3.2 Q0 0 3.2 0 H8.2 Q9.4 0 10.4 0.9 L12 2.2 Q12.6 2.6 13.6 2.6 H26.3 Q29.3 2.6 29.3 5.6 V7.75 H0 Z" fill="#747679"/><path d="M0 9.6 H29.3 V21 Q29.3 24 26.3 24 H3 Q0 24 0 21 Z" fill="#747679"/></svg><span class="t" id="cr1" style="left:185.85px;top:17.00px;font-size:23.5px;color:#dedede;letter-spacing:-0.109px;-webkit-text-stroke:0.5px #dedede;">Clock</span><svg class="ic" style="left:256.6px;top:18.4px" width="6.6" height="18.6" viewBox="0 0 6.6 18.6" ><path d="M1 1 L5.6 9.3 L1 17.6" fill="none" stroke="#949494" stroke-width="2.6" stroke-linecap="round" stroke-linejoin="round"/></svg><svg class="ic" style="left:281.8px;top:16.4px" width="24.8" height="19.6" viewBox="0 0 29.3 24" preserveAspectRatio="none"><path d="M0 3.2 Q0 0 3.2 0 H8.2 Q9.4 0 10.4 0.9 L12 2.2 Q12.6 2.6 13.6 2.6 H26.3 Q29.3 2.6 29.3 5.6 V7.75 H0 Z" fill="#747679"/><path d="M0 9.6 H29.3 V21 Q29.3 24 26.3 24 H3 Q0 24 0 21 Z" fill="#747679"/></svg><span class="t" id="cr2" style="left:318.51px;top:17.00px;font-size:23.5px;color:#dedede;letter-spacing:-0.232px;-webkit-text-stroke:0.5px #dedede;">Views</span><svg class="ic" style="left:390.4px;top:18.4px" width="6.6" height="18.6" viewBox="0 0 6.6 18.6" ><path d="M1 1 L5.6 9.3 L1 17.6" fill="none" stroke="#949494" stroke-width="2.6" stroke-linecap="round" stroke-linejoin="round"/></svg><svg class="ic" style="left:416.3px;top:16.2px" width="23.8" height="20.4" viewBox="2.45 3.41 18.05 16.35" preserveAspectRatio="none"><defs><linearGradient id="sg10" x1="0" y1="0" x2="0" y2="1"><stop offset="0" stop-color="#f09448"/><stop offset="1" stop-color="#ea8840"/></linearGradient></defs><path d="M13.543 3.41c4.114 2.47 6.545 7.162 5.549 11.131-.024.093-.05.181-.076.272l.002.001c2.062 2.538 1.5 5.258 1.236 4.745-1.072-2.086-3.066-1.568-4.088-1.043a6.803 6.803 0 0 1-.281.158l-.02.012-.002.002c-2.115 1.123-4.957 1.205-7.812-.022a12.568 12.568 0 0 1-5.64-4.838c.649.48 1.35.902 2.097 1.252 3.019 1.414 6.051 1.311 8.197-.002C9.651 12.73 7.101 9.67 5.146 7.191a10.628 10.628 0 0 1-1.005-1.384c2.34 2.142 6.038 4.83 7.365 5.576C8.69 8.408 6.208 4.743 6.324 4.86c4.436 4.47 8.528 6.996 8.528 6.996.154.085.27.154.36.213.085-.215.16-.437.224-.668.708-2.588-.09-5.548-1.893-7.992z" fill="url(#sg10)"/></svg><span class="t" id="cr3" style="left:452.84px;top:17.00px;font-size:23.5px;color:#dedede;letter-spacing:-0.106px;-webkit-text-stroke:0.5px #dedede;">WorldClockView</span><svg class="ic" style="left:634.6px;top:18.4px" width="6.6" height="18.6" viewBox="0 0 6.6 18.6" ><path d="M1 1 L5.6 9.3 L1 17.6" fill="none" stroke="#949494" stroke-width="2.6" stroke-linecap="round" stroke-linejoin="round"/></svg><div style="left:656.0px;top:10.2px;width:31.8px;height:31.8px;background:#5cc3d6;border-radius:6.5px;"></div><span class="t" id="crP" style="left:664.11px;top:18.00px;font-size:21.5px;color:#ffffff;font-weight:700;">P</span><span class="t" id="cr4" style="left:694.85px;top:17.00px;font-size:23.5px;color:#dedede;letter-spacing:0.530px;-webkit-text-stroke:0.5px #dedede;">body</span></nav><div class="hl" style="left:546.0px;top:188.0px;width:2478.0px;height:2.0px;background:#343434;"></div><main id="editor"><div style="left:0.0px;top:550.0px;width:1654.0px;height:50.0px;background:#444550;"></div><div style="left:127.8px;top:2.0px;width:22.2px;height:295.6px;background:#333338;border-radius:11.1px;"></div><div style="left:127.8px;top:452.0px;width:22.2px;height:245.7px;background:#333338;border-radius:11.1px;"></div><div style="left:127.8px;top:501.5px;width:22.2px;height:145.9px;background:#444448;border-radius:11.1px;"></div><div style="left:127.8px;top:550.0px;width:22.2px;height:50.0px;background:#676773;"></div><div style="left:127.8px;top:752.0px;width:22.2px;height:145.9px;background:#333338;border-radius:11.1px;"></div><div class="ln" style="top:0px;">1</div><div class="code" style="top:0px"><span class="c">//</span></div><div class="ln" style="top:50px;">2</div><div class="code" style="top:50px"><span class="c">//  WorldClockView.swift</span></div><div class="ln" style="top:100px;">3</div><div class="code" style="top:100px"><span class="c">//  Clock</span></div><div class="ln" style="top:150px;">4</div><div class="code" style="top:150px"><span class="c">//</span></div><div class="ln" style="top:200px;">5</div><div class="code" style="top:200px"><span class="c">//  Created by Russell Gordon on 2024-11-08.</span></div><div class="ln" style="top:250px;">6</div><div class="code" style="top:250px"><span class="c">//</span></div><div class="ln" style="top:300px;">7</div><div class="ln" style="top:350px;">8</div><div class="code" style="top:350px"><b>import</b> SwiftUI</div><div class="ln" style="top:400px;">9</div><div class="ln" style="top:450px;">10</div><div class="code" style="top:450px"><b>struct</b> <span class="ty">WorldClockView</span>: <span class="sy">View</span> {</div><div class="ln" style="top:500px;">11</div><div class="code" style="top:500px">    <b>var</b> <span class="od">body</span>: <b>some</b> <span class="sy">View</span> {</div><div class="ln" style="top:550px;color:#ffffff;">12</div><div class="code" style="top:550px">        <span class="sy">Text</span>(<span class="st">"World Clock"</span>)</div><div class="ln" style="top:600px;">13</div><div class="code" style="top:600px">    }</div><div class="ln" style="top:650px;">14</div><div class="code" style="top:650px">}</div><div class="ln" style="top:700px;">15</div><div class="ln" style="top:750px;">16</div><div class="code" style="top:750px"><span class="mc">#Preview</span> {</div><div class="ln" style="top:800px;">17</div><div class="code" style="top:800px">    <span class="pj">WorldClockView</span>()</div><div class="ln" style="top:850px;">18</div><div class="code" style="top:850px">}</div><div class="ln" style="top:900px;">19</div></main><div id="gutterR"><div style="left:8.0px;top:7.4px;width:16.0px;height:1522.4px;background:#98989b;border-radius:8px;"></div></div><div class="hl" style="left:2230.0px;top:190.0px;width:2.0px;height:1642.0px;background:#000;"></div><section id="preview"><div class="pbtn" style="left:24.6px;top:24.1px;width:62.0px;height:51.4px;"><svg class="ic" style="left:20.3px;top:11.2px" width="20.4" height="29.6" viewBox="0 0 20.4 29.6" ><path d="M3.6 1.2 H16.8 Q17.6 1.2 17 2 L14.2 4.6 V11.4 Q19.2 13.6 19.2 18 Q19.2 18.8 18.4 18.8 H2 Q1.2 18.8 1.2 18 Q1.2 13.6 6.2 11.4 V4.6 L3.4 2 Q2.8 1.2 3.6 1.2 Z" fill="none" stroke="#ebebeb" stroke-width="1.8" stroke-linecap="round" stroke-linejoin="round"/><path d="M10.2 18.8 V28.4" fill="none" stroke="#ebebeb" stroke-width="2" stroke-linecap="round" stroke-linejoin="round"/><path d="M5.4 14.6 Q10.2 11.6 15 14.6 L17.6 17.6 H2.8 Z" fill="#ebebeb" opacity="0.0"/></svg></div><div style="left:107.3px;top:24.1px;width:238.8px;height:51.4px;background:#6a7fa6;border-radius:11px;box-shadow:inset 0 0 0 1.2px rgba(255,255,255,0.16),0 1px 5px rgba(0,0,0,0.3);"><svg class="ic" style="left:17.4px;top:12.9px" width="22.6" height="23.8" viewBox="0 0 22.6 23.8" ><path d="M6.6 0.8 H16" fill="none" stroke="#ffffff" stroke-width="1.4" stroke-linecap="round" stroke-linejoin="round"/><path d="M4.4 3.8 H18.2" fill="none" stroke="#ffffff" stroke-width="1.5" stroke-linecap="round" stroke-linejoin="round"/><rect x="1" y="6.8" width="20.6" height="16" rx="3.4" fill="none" stroke="#ffffff" stroke-width="1.9" stroke-linecap="round" stroke-linejoin="round"/></svg></div><span class="t" id="chip" style="left:160.00px;top:40.00px;font-size:22.2px;color:#ffffff;letter-spacing:0.554px;-webkit-text-stroke:0.35px #ffffff;">WorldClockView</span><div style="left:68.8px;top:388.5px;width:12.0px;height:46.8px;background:#2e2e2f;border-radius:2.5px;box-shadow:inset 0 1px 0 rgba(255,255,255,0.12);"></div><div style="left:68.8px;top:479.0px;width:12.0px;height:90.0px;background:#2e2e2f;border-radius:2.5px;box-shadow:inset 0 1px 0 rgba(255,255,255,0.12);"></div><div style="left:68.8px;top:596.0px;width:12.0px;height:90.5px;background:#2e2e2f;border-radius:2.5px;box-shadow:inset 0 1px 0 rgba(255,255,255,0.12);"></div><div style="left:711.0px;top:540.5px;width:11.4px;height:144.0px;background:#2e2e2f;border-radius:2.5px;box-shadow:inset 0 1px 0 rgba(255,255,255,0.12);"></div><svg class="ic" style="left:68px;top:146px" width="660" height="1352" viewBox="0 0 660 1352"><path d="M9.4 138.3 C9.4 51.3 52.4 8.3 139.4 8.3 H517.0 C604.0 8.3 647.0 51.3 647.0 138.3 V1212.0 C647.0 1299.0 604.0 1342.0 517.0 1342.0 H139.4 C52.4 1342.0 9.4 1299.0 9.4 1212.0 Z" fill="#2b2b2c" stroke="rgba(255,255,255,0.30)" stroke-width="1.3"/><path d="M18.7 134.0 C18.7 55.9 57.0 17.6 135.1 17.6 H521.5 C599.6 17.6 637.9 55.9 637.9 134.0 V1216.2 C637.9 1294.3 599.6 1332.6 521.5 1332.6 H135.1 C57.0 1332.6 18.7 1294.3 18.7 1216.2 Z" fill="#000"/><path d="M32.1 127.9 C32.1 62.4 63.6 30.9 129.1 30.9 H527.5 C593.0 30.9 624.5 62.4 624.5 127.9 V1222.2 C624.5 1287.7 593.0 1319.2 527.5 1319.2 H129.1 C63.6 1319.2 32.1 1287.7 32.1 1222.2 Z" fill="#fff"/></svg><div style="left:303.4px;top:197.3px;width:184.6px;height:54.7px;background:#000;border-radius:27.4px;"></div><span class="t" id="wc" style="left:329.10px;top:830.00px;font-size:26.4px;color:#000000;letter-spacing:-0.615px;">World Clock</span><div class="pbtn" style="left:24.5px;top:1566.0px;width:162.0px;height:51.6px;"><svg class="ic" style="left:17.4px;top:12.9px" width="26.4" height="26.4" viewBox="0 0 26.4 26.4" ><circle cx="13.2" cy="13.2" r="13.2" fill="#3478f6"/><path d="M9.3 8.1 L18.8 13.2 L9.3 18.3 Z" fill="#3a3a3a" stroke="#3a3a3a" stroke-width="1.4" stroke-linejoin="round"/></svg><svg class="ic" style="left:65.6px;top:14.2px" width="23.6" height="23.6" viewBox="0 0 23.6 23.6" ><rect x="1.2" y="1.2" width="21.2" height="21.2" rx="3.6" fill="none" stroke="#ebebeb" stroke-width="2.3" stroke-linecap="round" stroke-linejoin="round"/><path d="M8.2 5.6 L8.2 16.6 L10.9 14.2 L13 18.8 L15 17.9 L12.9 13.4 L16.4 13.2 Z" fill="#ebebeb"/></svg><svg class="ic" style="left:119.3px;top:16.4px" width="23.6" height="19.6" viewBox="0 0 23.6 19.6" ><rect x="0.8" y="0.8" width="5.2" height="7.6" rx="1.2" fill="none" stroke="#ebebeb" stroke-width="1.5" stroke-linecap="round" stroke-linejoin="round"/><rect x="0.8" y="11.2" width="5.2" height="7.6" rx="1.2" fill="none" stroke="#ebebeb" stroke-width="1.5" stroke-linecap="round" stroke-linejoin="round"/><rect x="9.2" y="0.8" width="5.2" height="7.6" rx="1.2" fill="none" stroke="#ebebeb" stroke-width="1.5" stroke-linecap="round" stroke-linejoin="round"/><rect x="9.2" y="11.2" width="5.2" height="7.6" rx="1.2" fill="none" stroke="#ebebeb" stroke-width="1.5" stroke-linecap="round" stroke-linejoin="round"/><rect x="17.6" y="0.8" width="5.2" height="7.6" rx="1.2" fill="none" stroke="#ebebeb" stroke-width="1.5" stroke-linecap="round" stroke-linejoin="round"/><rect x="17.6" y="11.2" width="5.2" height="7.6" rx="1.2" fill="none" stroke="#ebebeb" stroke-width="1.5" stroke-linecap="round" stroke-linejoin="round"/></svg></div><div class="pbtn" style="left:207.8px;top:1566.0px;width:61.4px;height:51.6px;"><svg class="ic" style="left:18.2px;top:14.2px" width="24.8" height="24.4" viewBox="0 0 24.8 24.4" ><rect x="1.1" y="1.1" width="22.6" height="9.2" rx="4.6" fill="none" stroke="#ebebeb" stroke-width="2" stroke-linecap="round" stroke-linejoin="round"/><circle cx="6" cy="5.7" r="2.6" fill="#ebebeb" opacity="0.75"/><rect x="0" y="13.6" width="24.8" height="10.8" rx="5.4" fill="#ebebeb"/><circle cx="19" cy="19" r="3.1" fill="#3a3a3a"/></svg></div><div class="pbtn" style="left:290.6px;top:1566.0px;width:52.8px;height:51.6px;"><svg class="ic" style="left:19.2px;top:14.8px" width="14.2" height="23.0" viewBox="0 0 14.2 23" ><rect x="1" y="1" width="12.2" height="21" rx="2.8" fill="#5c5c5c" stroke="#ebebeb" stroke-width="1.7"/><path d="M5.4 3.6 H8.8 M5 19.6 H9.2" fill="none" stroke="#ebebeb" stroke-width="1.1" stroke-linecap="round" stroke-linejoin="round"/></svg></div><div class="pbtn" style="left:560.7px;top:1566.2px;width:206.6px;height:51.4px;"><svg class="ic" style="left:17.9px;top:12.3px" width="27.0" height="27.0" viewBox="0 0 27 27" ><circle cx="11" cy="11" r="9.1" fill="none" stroke="#ebebeb" stroke-width="3" stroke-linecap="round" stroke-linejoin="round"/><path d="M17.8 17.9 L24.4 24.6" fill="none" stroke="#ebebeb" stroke-width="3.4" stroke-linecap="round" stroke-linejoin="round"/><path d="M7 11 H15" fill="none" stroke="#ebebeb" stroke-width="1.9" stroke-linecap="round" stroke-linejoin="round"/></svg><svg class="ic" style="left:65.8px;top:12.3px" width="27.0" height="27.0" viewBox="0 0 27 27" ><circle cx="11" cy="11" r="9.1" fill="none" stroke="#ebebeb" stroke-width="3" stroke-linecap="round" stroke-linejoin="round"/><path d="M17.8 17.9 L24.4 24.6" fill="none" stroke="#ebebeb" stroke-width="3.4" stroke-linecap="round" stroke-linejoin="round"/><text x="11" y="15.1" text-anchor="middle" font-family="Liberation Sans, sans-serif" font-weight="700" font-size="11.6" fill="#ebebeb">1</text></svg><svg class="ic" style="left:113.8px;top:12.3px" width="27.0" height="27.0" viewBox="0 0 27 27" ><circle cx="11" cy="11" r="9.1" fill="none" stroke="#b4b4b4" stroke-width="3" stroke-linecap="round" stroke-linejoin="round"/><path d="M17.8 17.9 L24.4 24.6" fill="none" stroke="#b4b4b4" stroke-width="3.4" stroke-linecap="round" stroke-linejoin="round"/><rect x="7.5" y="7.5" width="7" height="7" rx="1.4" fill="none" stroke="#b4b4b4" stroke-width="1.9" stroke-linecap="round" stroke-linejoin="round"/></svg><svg class="ic" style="left:161.8px;top:12.3px" width="27.0" height="27.0" viewBox="0 0 27 27" ><circle cx="11" cy="11" r="9.1" fill="none" stroke="#ebebeb" stroke-width="3" stroke-linecap="round" stroke-linejoin="round"/><path d="M17.8 17.9 L24.4 24.6" fill="none" stroke="#ebebeb" stroke-width="3.4" stroke-linecap="round" stroke-linejoin="round"/><path d="M7 11 H15 M11 7 V15" fill="none" stroke="#ebebeb" stroke-width="1.9" stroke-linecap="round" stroke-linejoin="round"/></svg></div></section><div class="hl" style="left:546.0px;top:1832.0px;width:2478.0px;height:2.0px;background:#000;"></div><footer id="status"><svg class="ic" style="left:22.9px;top:17.6px" width="29.8" height="18.8" viewBox="0 0 29.8 18.8" ><path d="M3.4 0 H21.6 Q23.2 0 24.2 1.1 L29 7.6 Q30.2 9.4 29 11.2 L24.2 17.7 Q23.2 18.8 21.6 18.8 H3.4 Q0 18.8 0 15.4 V3.4 Q0 0 3.4 0 Z" fill="#3478f6"/></svg><span class="t" id="stLine" style="left:2213.15px;top:17.00px;font-size:21.8px;color:#999999;font-weight:700;letter-spacing:0.568px;">Line: 12</span><span class="t" id="stCol" style="left:2312.45px;top:17.00px;font-size:21.8px;color:#999999;font-weight:700;letter-spacing:0.863px;">Col: 28</span><div style="left:2408.6px;top:15.0px;width:1.6px;height:24.0px;background:#3c3c3c;"></div><svg class="ic" style="left:2426.7px;top:14.0px" width="26.4" height="26.0" viewBox="0 0 25.4 24.4" ><rect x="1.1" y="1.1" width="23.2" height="22.2" rx="4.4" fill="none" stroke="#a9a9a9" stroke-width="2.2" stroke-linecap="round" stroke-linejoin="round"/><rect x="4.6" y="14.6" width="16.2" height="5.6" rx="1.6" fill="#a9a9a9"/></svg></footer><div style="left:0.0px;top:0.0px;width:3024.0px;height:1.6px;background:rgba(255,255,255,0.24);"></div></div></body></html>
